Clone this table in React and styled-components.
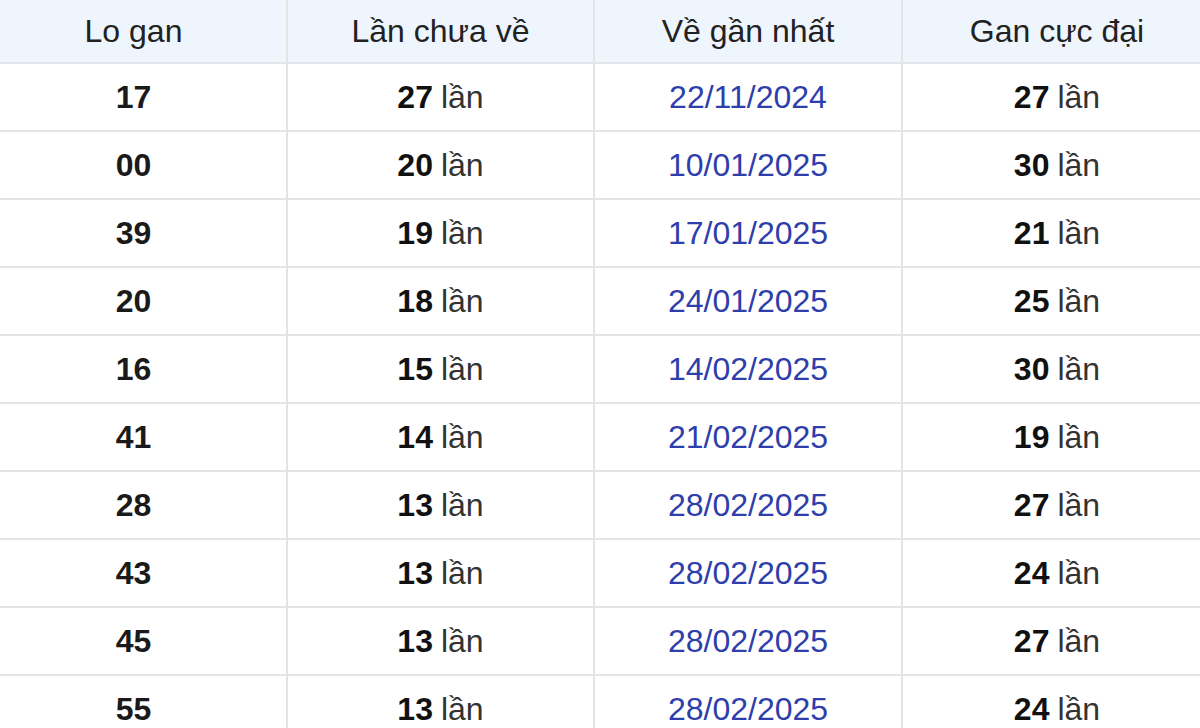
import { createGlobalStyle, styled } from "styled-components";

const GlobalStyle = createGlobalStyle`
  html, body {
    margin: 0;
    padding: 0;
    background: #ffffff;
    overflow: hidden;
  }
  body {
    font-family: "Liberation Sans", Arial, sans-serif;
  }
`;

const Table = styled.div`
  margin-left: -19px;
  width: 1232px;
`;

const Row = styled.div`
  display: grid;
  grid-template-columns: 307px 307px 308px 310px;
  height: ${(p) => (p.$head ? "64px" : "68px")};
  background: ${(p) => (p.$head ? "#eef5fd" : "#ffffff")};
`;

const Cell = styled.div`
  display: flex;
  align-items: center;
  justify-content: center;
  border-right: 2px solid #e4e4e4;
  border-bottom: 2px solid #e4e4e4;
  font-size: 32px;
  color: ${(p) => (p.$date ? "#2e3eab" : "#1a1a1a")};
  font-weight: ${(p) => (p.$bold ? 700 : 400)};
  white-space: nowrap;
`;

const HeadCell = styled(Cell)`
  color: #222222;
  border-bottom-color: #e2e6ea;
`;

const Count = styled.b`
  font-weight: 700;
  color: #111111;
  margin-right: 8px;
`;

const Unit = styled.span`
  color: #333333;
`;

const rows = [
  ["17", 27, "22/11/2024", 27],
  ["00", 20, "10/01/2025", 30],
  ["39", 19, "17/01/2025", 21],
  ["20", 18, "24/01/2025", 25],
  ["16", 15, "14/02/2025", 30],
  ["41", 14, "21/02/2025", 19],
  ["28", 13, "28/02/2025", 27],
  ["43", 13, "28/02/2025", 24],
  ["45", 13, "28/02/2025", 27],
  ["55", 13, "28/02/2025", 24],
];

function Times({ n }) {
  return (
    <Cell>
      <Count>{n}</Count>
      <Unit>lần</Unit>
    </Cell>
  );
}

export default function App() {
  return (
    <>
      <GlobalStyle />
      <Table>
        <Row $head>
          <HeadCell>Lo gan</HeadCell>
          <HeadCell>Lần chưa về</HeadCell>
          <HeadCell>Về gần nhất</HeadCell>
          <HeadCell>Gan cực đại</HeadCell>
        </Row>
        {rows.map(([lo, miss, date, max], i) => (
          <Row key={i}>
            <Cell $bold>{lo}</Cell>
            <Times n={miss} />
            <Cell $date>{date}</Cell>
            <Times n={max} />
          </Row>
        ))}
      </Table>
    </>
  );
}
